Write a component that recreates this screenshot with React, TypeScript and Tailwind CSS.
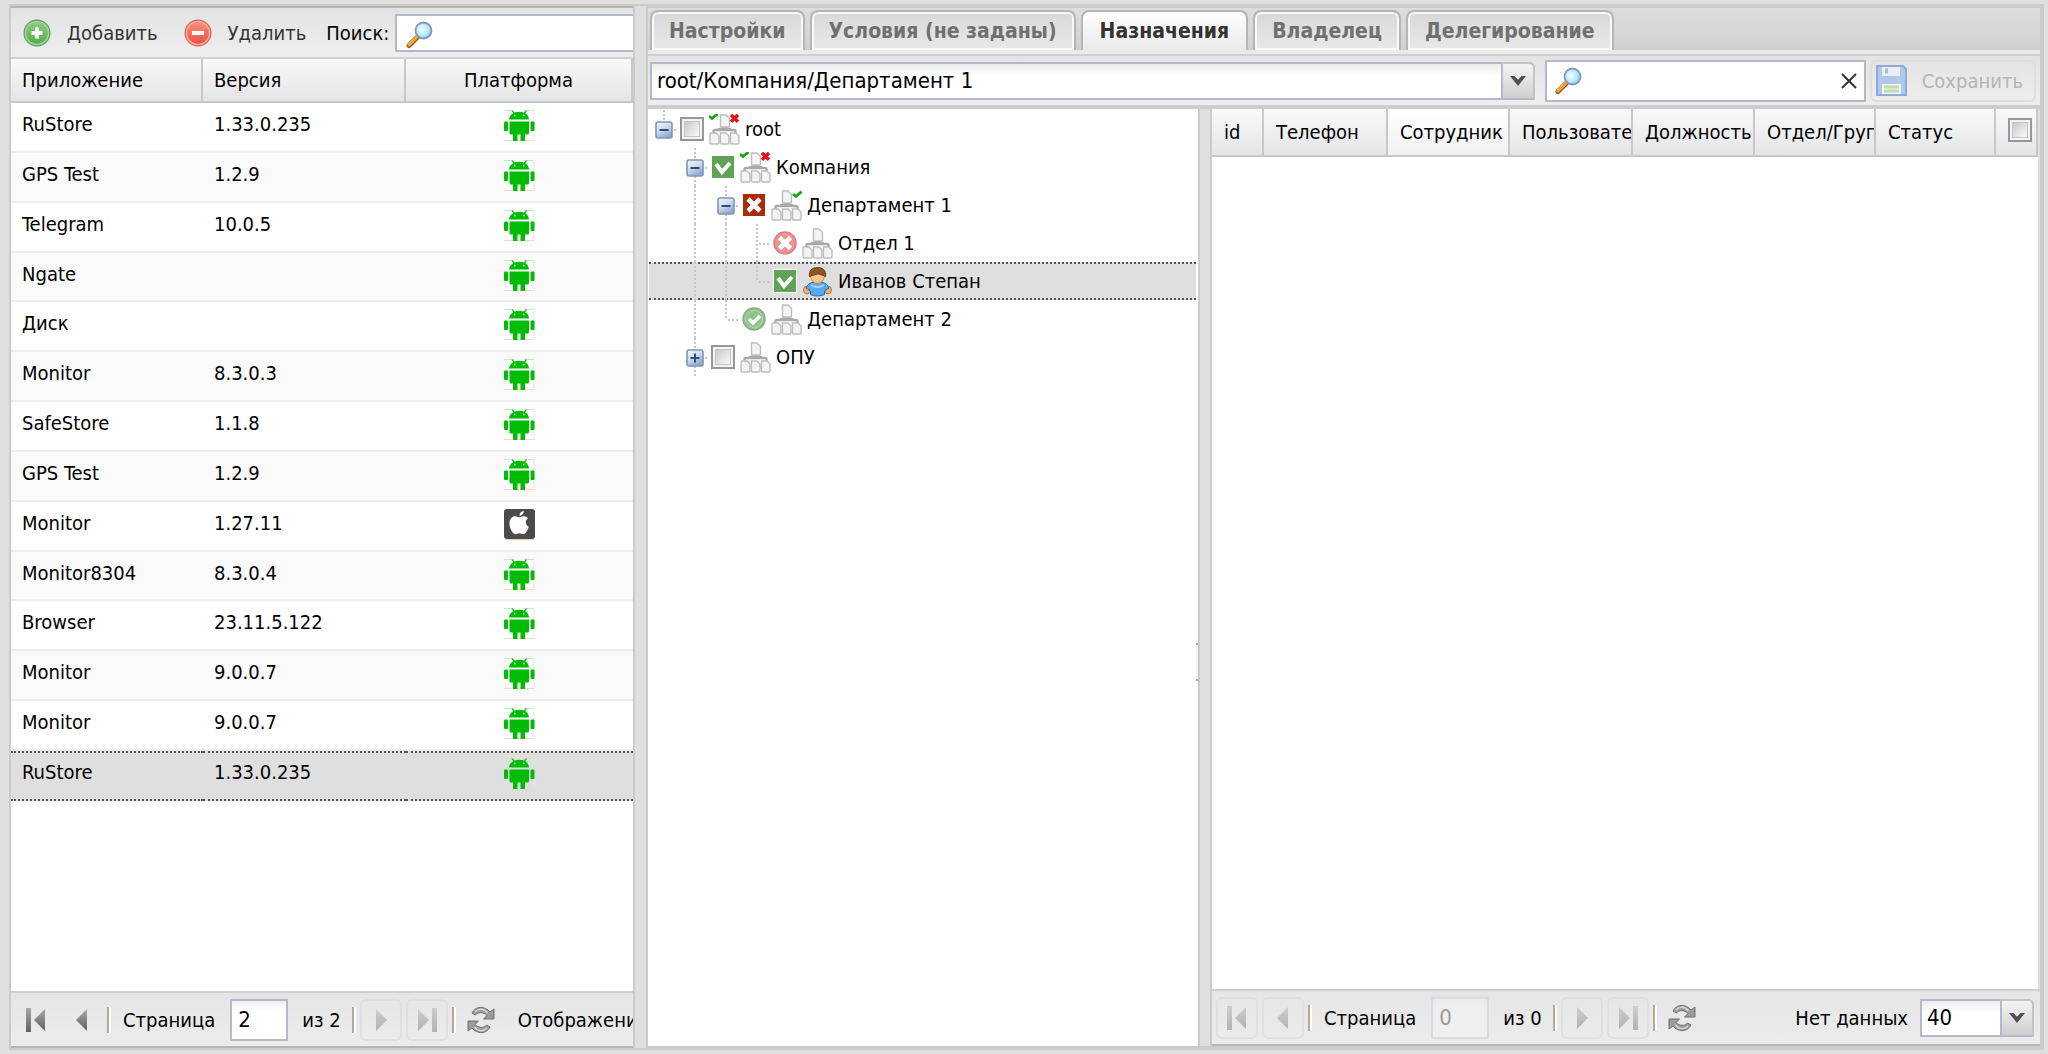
import { useState } from 'react';
import type { ReactNode } from 'react';

const apps = [
  { name: 'RuStore', version: '1.33.0.235', platform: 'android' },
  { name: 'GPS Test', version: '1.2.9', platform: 'android' },
  { name: 'Telegram', version: '10.0.5', platform: 'android' },
  { name: 'Ngate', version: '', platform: 'android' },
  { name: 'Диск', version: '', platform: 'android' },
  { name: 'Monitor', version: '8.3.0.3', platform: 'android' },
  { name: 'SafeStore', version: '1.1.8', platform: 'android' },
  { name: 'GPS Test', version: '1.2.9', platform: 'android' },
  { name: 'Monitor', version: '1.27.11', platform: 'apple' },
  { name: 'Monitor8304', version: '8.3.0.4', platform: 'android' },
  { name: 'Browser', version: '23.11.5.122', platform: 'android' },
  { name: 'Monitor', version: '9.0.0.7', platform: 'android' },
  { name: 'Monitor', version: '9.0.0.7', platform: 'android' },
  { name: 'RuStore', version: '1.33.0.235', platform: 'android' },
];

const tabs = ['Настройки', 'Условия (не заданы)', 'Назначения', 'Владелец', 'Делегирование'];

type Guide = 'empty' | 'line' | 'tee' | 'end' | 'root' | 'minus' | 'plus';
type Mark = 'none' | 'allow' | 'deny' | 'inherit-allow' | 'inherit-deny';

const nodes: { id: string; label: string; guides: Guide[]; mark: Mark; icon: string }[] = [
  { id: 'root', label: 'root', guides: ['root'], mark: 'none', icon: 'both' },
  { id: 'company', label: 'Компания', guides: ['empty', 'minus'], mark: 'allow', icon: 'both' },
  { id: 'dep1', label: 'Департамент 1', guides: ['empty', 'line', 'minus'], mark: 'deny', icon: 'check' },
  { id: 'otdel1', label: 'Отдел 1', guides: ['empty', 'line', 'line', 'tee'], mark: 'inherit-deny', icon: 'plain' },
  { id: 'ivanov', label: 'Иванов Степан', guides: ['empty', 'line', 'line', 'end'], mark: 'allow', icon: 'user' },
  { id: 'dep2', label: 'Департамент 2', guides: ['empty', 'line', 'end'], mark: 'inherit-allow', icon: 'plain' },
  { id: 'opu', label: 'ОПУ', guides: ['empty', 'plus'], mark: 'none', icon: 'plain' },
];

function AndroidIcon() {
  return (
    <svg width="31" height="31" viewBox="0 0 31 31" className="mx-auto block">
      <path d="M0 0.5h9M20 0.5h10" stroke="#b5f0c8" />
      <path d="M30 1v28" stroke="#e6e6e6" />
      <path d="M0 30.5h31" stroke="#fcd5c0" />
      <g fill="#00bc05">
        <path d="M5 9.5c.3-3 2-5.200 4.300-6.300L7.500.8l1-.5 2 2.300c3-1 6.500-1 9.500 0l2-2.300 1 .5-1.800 2.400c2.300 1.100 3.500 3.300 3.800 6.300z" />
        <path d="M5.500 11.500H25v11.500q0 1.500-1.500 1.500h-2.500V31h-4.500v-6.500h-3V31H9v-6.500H7q-1.500 0-1.500-1.500z" />
        <rect x="0" y="11.500" width="4" height="9.500" rx="1" />
        <rect x="26.500" y="11.500" width="4" height="9.500" rx="1" />
      </g>
      <path d="M10 5.500h1.500M19 5.500h1.500" stroke="#d8f7d8" strokeWidth="1.500" />
    </svg>
  );
}

function AppleIcon() {
  return (
    <svg width="31" height="31" viewBox="0 0 31 31" className="mx-auto block">
      <rect width="31" height="30" rx="3" fill="#4b4b4b" />
      <path d="M1 30.500h29" stroke="#f3c9ae" />
      <path d="M16 8.200c3-1.500 6-1.200 8 1-3.200 2.200-2.800 6.800.800 8.600-1 3-2.800 6.500-4.600 7.200-1.600.6-2.700-.7-4.700-.7s-3 1.300-4.700.7C8.500 24.200 5.500 19.500 5.500 14.500c0-5 3.300-7.800 7-7 1.300.200 2.200 1 3.500.7z" fill="#fff" />
      <path d="M15.500 6.800c0-2.500 1.600-4.500 4.200-5 .2 2.700-1.600 4.800-4.200 5z" fill="#fff" />
    </svg>
  );
}

function SearchIcon() {
  return (
    <svg width="28" height="28" viewBox="0 0 28 28">
      <defs>
        <radialGradient id="lens" cx="0.400" cy="0.450" r="0.600">
          <stop offset="0" stopColor="#f2ffff" />
          <stop offset="0.600" stopColor="#b5edff" />
          <stop offset="1" stopColor="#7fd3f7" />
        </radialGradient>
      </defs>
      <path d="M11.500 16L3 24.500" stroke="#7a5c36" strokeWidth="5" strokeLinecap="round" />
      <path d="M11 15.800L3 23.800" stroke="#f9a72b" strokeWidth="3.400" strokeLinecap="round" />
      <circle cx="17.500" cy="9.500" r="8" fill="url(#lens)" stroke="#8a93bd" strokeWidth="1.800" />
    </svg>
  );
}

function AddIcon() {
  return (
    <svg width="28" height="28" viewBox="0 0 28 28">
      <defs>
        <linearGradient id="add" x1="0" y1="0" x2="0" y2="1">
          <stop offset="0" stopColor="#8fcc85" />
          <stop offset="1" stopColor="#55ac4a" />
        </linearGradient>
      </defs>
      <circle cx="14" cy="14" r="13.500" fill="#5aa55a" />
      <circle cx="14" cy="14" r="11.500" fill="url(#add)" stroke="#a3d69b" strokeWidth="1.500" />
      <path d="M14 8.500v11M8.500 14h11" stroke="#fff" strokeWidth="4" />
    </svg>
  );
}

function RemoveIcon() {
  return (
    <svg width="28" height="28" viewBox="0 0 28 28">
      <defs>
        <linearGradient id="remove" x1="0" y1="0" x2="0" y2="1">
          <stop offset="0" stopColor="#f8907c" />
          <stop offset="1" stopColor="#ea4f41" />
        </linearGradient>
      </defs>
      <circle cx="14" cy="14" r="13.500" fill="#d9685c" />
      <circle cx="14" cy="14" r="11.500" fill="url(#remove)" stroke="#f7aa9e" strokeWidth="1.500" />
      <path d="M8 14h12" stroke="#fff" strokeWidth="4" />
    </svg>
  );
}

function SaveIcon() {
  return (
    <svg width="31" height="31" viewBox="0 0 31 31">
      <path d="M1 1h26l3 3v26H1z" fill="#b0c8ec" stroke="#8fabd6" strokeWidth="2" />
      <path d="M6 2h18v9H6z" fill="#e8eff9" />
      <path d="M9 3.500h3v5H9z" fill="#9fbbe6" />
      <path d="M6 19h19v10H6z" fill="#f1f6ee" />
      <path d="M8 22h15M8 26h15" stroke="#bfdcae" strokeWidth="3" />
    </svg>
  );
}

function Chevron() {
  return (
    <svg width="18" height="12" viewBox="0 0 18 12">
      <path d="M1 1h4.500L9 4.800 12.500 1H17L9 11z" fill="#505050" />
    </svg>
  );
}

function OrgIcon({ kind }: { kind: string }) {
  return (
    <svg width="31" height="31" viewBox="0 0 31 31">
      <path d="M4.500 19.500v-2q0-1.500 1.500-1.500h19q1.500 0 1.500 1.500v2M9 15.500q6.500-3 13 0" fill="none" stroke="#a9a9a9" strokeWidth="2.400" />
      <g fill="#f4f4f4" stroke="#bdbdbd" strokeWidth="1.400">
        <path d="M11.500 1h5.500l3.500 3.500V12q0 1-1 1h-7q-1 0-1-1V2q0-1 0-1z" />
        <path d="M1.500 19h5.500l3 3v7q0 1-1 1H2q-1 0-1-1v-9z" />
        <path d="M11.500 19h5.500l3 3v7q0 1-1 1h-6.500q-1 0-1-1v-10z" />
        <path d="M21.500 19H27l3 3v7q0 1-1 1h-6.500q-1 0-1-1v-10z" />
      </g>
      {kind === 'both' && <path d="M0 2l3 2.500L8.500 0" fill="none" stroke="#12a512" strokeWidth="2.800" />}
      {kind === 'both' && <path d="M22 .8l7 7M29 .8l-7 7" stroke="#e60f17" strokeWidth="3.400" />}
      {kind === 'check' && <path d="M22 4l3 2.500L30.500 1.500" fill="none" stroke="#12a512" strokeWidth="2.800" />}
    </svg>
  );
}

function UserIcon() {
  return (
    <svg width="31" height="31" viewBox="0 0 31 31">
      <ellipse cx="5" cy="24" rx="3.500" ry="4" fill="#f0b070" stroke="#c07a35" />
      <ellipse cx="26" cy="24" rx="3.500" ry="4" fill="#f0b070" stroke="#c07a35" />
      <path d="M4 22c2-4.500 5-6 11.500-6S25 17.500 27 22l-4.500 3v3.500c-3 2-11 2-14 0V25z" fill="#58a8f0" stroke="#2c67bd" />
      <path d="M9 19c3 2.500 10 2.500 13 0" fill="none" stroke="#a9d6fb" strokeWidth="2" />
      <path d="M8.500 8c0 6 3 9.500 7 9.500s7-3.500 7-9.500z" fill="#fbc58b" stroke="#c98647" />
      <path d="M7.500 11C6.500 4.500 10 1.500 15.500 1.500S24.500 4.500 23.500 11l-1.500-1.500c-3-.5-4.500-1-6-2-1.500 1-4 2-7 2z" fill="#8d5522" stroke="#6f3f14" />
    </svg>
  );
}

function GuideCell({ kind }: { kind: Guide }) {
  const top = kind !== 'empty';
  const bottom = kind === 'line' || kind === 'tee' || kind === 'minus' || kind === 'plus';
  const stub = top && kind !== 'line';
  const box = kind === 'root' || kind === 'minus' || kind === 'plus';
  return (
    <svg width="31" height="38" viewBox="0 0 31 38" className="shrink-0">
      <g stroke="#c6c6c6" strokeWidth="2" strokeDasharray="2 2">
        {top && <path d={kind === 'root' ? 'M15 0v10' : 'M15 0v20'} />}
        {bottom && <path d="M15 20v18" />}
        {stub && <path d="M17 20h12" />}
      </g>
      {box && (
        <g>
          <defs>
            <linearGradient id="expander" x1="0" y1="0" x2="0.600" y2="1">
              <stop offset="0" stopColor="#f4f8fc" />
              <stop offset="0.500" stopColor="#cfdcee" />
              <stop offset="1" stopColor="#8da9cf" />
            </linearGradient>
          </defs>
          <rect x="7" y="12" width="16" height="16" rx="2" fill="url(#expander)" stroke="#7d95b8" strokeWidth="1.600" />
          <path d="M10.500 20h9" stroke="#2e4d77" strokeWidth="2" />
          {kind === 'plus' && <path d="M15 15.500v9" stroke="#2e4d77" strokeWidth="2" />}
        </g>
      )}
    </svg>
  );
}

function MarkIcon({ mark }: { mark: Mark }) {
  return (
    <svg width="24" height="24" viewBox="0 0 24 24" className="pointer-events-none absolute inset-0">
      {mark === 'none' && (
        <>
          <defs>
            <linearGradient id="tick" x1="0" y1="0" x2="1" y2="1">
              <stop offset="0" stopColor="#c3c8cf" />
              <stop offset="1" stopColor="#fbfbfb" />
            </linearGradient>
          </defs>
          <rect x="1" y="1" width="22" height="22" fill="#f3f3f3" stroke="#979797" strokeWidth="2" />
          <rect x="4.500" y="4.500" width="15" height="15" fill="url(#tick)" stroke="#c4c4c4" />
        </>
      )}
      {mark === 'allow' && (
        <>
          <rect x="0" y="0" width="24" height="24" fill="#fff" />
          <rect x="1" y="1" width="22" height="22" fill="#5fa356" />
          <path d="M5 9l6 8 8-9" fill="none" stroke="#fff" strokeWidth="4" />
        </>
      )}
      {mark === 'deny' && (
        <>
          <rect x="1" y="1" width="22" height="22" fill="#ab2a08" />
          <path d="M6 6l12 12M18 6L6 18" stroke="#fff" strokeWidth="4.600" />
        </>
      )}
      {mark === 'inherit-deny' && (
        <>
          <circle cx="12" cy="12" r="11" fill="#e79494" stroke="#dd7f7f" strokeWidth="1.500" />
          <path d="M6.500 6.500l11 11M17.500 6.500l-11 11" stroke="#fff" strokeWidth="4.600" />
        </>
      )}
      {mark === 'inherit-allow' && (
        <>
          <circle cx="12" cy="12" r="11" fill="#93c08e" stroke="#84b37f" strokeWidth="1.500" />
          <circle cx="12" cy="12" r="8.500" fill="none" stroke="#b7d7b3" />
          <path d="M7 12l4 4 7-7" fill="none" stroke="#fff" strokeWidth="3.400" />
        </>
      )}
    </svg>
  );
}

function PagerArrow({ kind }: { kind: string }) {
  return (
    <svg width="24" height="28" viewBox="0 0 24 28">
      <defs>
        <linearGradient id="arrow" x1="0" y1="0" x2="0" y2="1">
          <stop offset="0" stopColor="#a8a8a8" />
          <stop offset="1" stopColor="#606060" />
        </linearGradient>
      </defs>
      <g fill="url(#arrow)">
        {kind === 'first' && <path d="M2 2h5v24H2zM21 3v22L10 14z" />}
        {kind === 'prev' && <path d="M17 3v22L6 14z" />}
        {kind === 'next' && <path d="M7 3v22L18 14z" />}
        {kind === 'last' && <path d="M17 2h5v24h-5zM3 3v22L14 14z" />}
      </g>
    </svg>
  );
}

function RefreshIcon() {
  return (
    <svg width="28" height="28" viewBox="0 0 28 28">
      <g fill="#9b9b9b" stroke="#707070" strokeWidth="1" strokeLinejoin="round">
        <path d="M5 7C8 1 15-.5 21 4l2 2 4-3v10H16.500l3.500-3.500C16.500 6 11 5.500 8.500 9z" />
        <path d="M23 21C20 27 13 28.500 7 24l-2-2-4 3V15h10.500L8 18.500C11.500 22 17 22.500 19.500 19z" />
      </g>
      <path d="M8 6c4-4 9-3.500 12.500 1M20 22c-4 4-9 3.500-12.500-1" fill="none" stroke="#d5d5d5" strokeWidth="1.500" />
    </svg>
  );
}

function PagerButton({ kind, label, disabled }: { kind: string; label: string; disabled?: boolean }) {
  return (
    <button
      aria-label={label}
      disabled={disabled}
      className="flex size-[42px] shrink-0 items-center justify-center rounded-md border-2 border-transparent disabled:border-[#dfdfdf] disabled:*:opacity-40"
    >
      {kind === 'refresh' ? <RefreshIcon /> : <PagerArrow kind={kind} />}
    </button>
  );
}

function Separator() {
  return <span className="h-[26px] w-1 shrink-0 border-l-2 border-[#b3ab97] bg-white" />;
}

function Pager({ id, page, total, first, children }: { id: string; page: string; total: string; first?: boolean; children: ReactNode }) {
  return (
    <div className="flex h-[57px] shrink-0 items-center gap-1 overflow-hidden border-y-2 border-t-[#cfcfcf] border-b-[#c0b1b1] bg-linear-to-b from-[#e5e5e5] to-[#ececec] px-1 whitespace-nowrap">
      <PagerButton kind="first" label="Первая страница" disabled={first} />
      <PagerButton kind="prev" label="Предыдущая страница" disabled={first} />
      <Separator />
      <label htmlFor={id} className="mx-2">Страница</label>
      <input
        id={id}
        defaultValue={page}
        disabled={first}
        className="mx-[3px] h-[42px] w-[58px] shrink-0 border-2 border-[#b5b8c8] bg-white bg-linear-to-b from-[#edf0f0] to-white to-25% px-[6px] text-[22px] disabled:border-[#d9dbe2] disabled:from-[#ebebeb] disabled:to-[#efefef] disabled:text-[#9b9b9b]"
      />
      <span className="mx-[7px]">{total}</span>
      <Separator />
      <PagerButton kind="next" label="Следующая страница" disabled />
      <PagerButton kind="last" label="Последняя страница" disabled />
      <Separator />
      <PagerButton kind="refresh" label="Обновить" />
      {children}
    </div>
  );
}

function Combo({ id, label, value, className }: { id: string; label: string; value: string; className: string }) {
  return (
    <div className={className}>
      <select
        id={id}
        aria-label={label}
        className="h-[38px] w-full appearance-none rounded-tr-md border-2 border-[#b5b8c8] bg-linear-to-b from-[#e9eded] to-white to-35% pl-[5px] text-[22px]"
      >
        <option>{value}</option>
      </select>
      <span className="pointer-events-none absolute inset-y-0 right-0 flex w-[34px] items-center justify-center rounded-tr-md border-2 border-[#b5b8c8] border-t-[#c4c4c4] border-r-[#c4c4c4] bg-linear-to-b from-[#f4f4f4] to-[#cfcfcf]">
        <Chevron />
      </span>
    </div>
  );
}

function AppsPanel() {
  const [selected, setSelected] = useState(13);
  return (
    <section className="flex w-[626px] shrink-0 flex-col border-x-2 border-[#cbcbcb]">
      <div className="flex h-[53px] shrink-0 items-center overflow-hidden border-y-2 border-t-[#c0b1b1] border-b-[#d0d0d0] bg-linear-to-b from-[#e3e3e3] to-[#eeeeee] whitespace-nowrap">
        <button className="ml-3 flex shrink-0 items-center gap-4 text-[#333]">
          <AddIcon />
          Добавить
        </button>
        <button className="ml-[26px] flex shrink-0 items-center gap-4 text-[#333]">
          <RemoveIcon />
          Удалить
        </button>
        <label htmlFor="app-search" className="ml-5 shrink-0">Поиск:</label>
        <div className="relative ml-[6px] h-[38px] min-w-0 flex-1">
          <input id="app-search" className="h-full w-full border-2 border-r-0 border-[#b5b8c8] bg-white pr-2 pl-11 text-[22px]" />
          <span className="pointer-events-none absolute top-[7px] left-[11px]">
            <SearchIcon />
          </span>
        </div>
      </div>
      <div className="min-h-0 flex-1 overflow-hidden bg-white">
        <table className="w-full table-fixed border-separate border-spacing-0">
          <thead>
            <tr className="h-11 bg-linear-to-b from-[#f9f9f9] to-[#e3e4e6]">
              <th className="w-[192px] border-r-2 border-b-2 border-[#c8c8c8] px-[11px] text-left font-normal">Приложение</th>
              <th className="w-[203px] border-r-2 border-b-2 border-[#c8c8c8] px-[11px] text-left font-normal">Версия</th>
              <th className="border-r-2 border-b-2 border-[#c8c8c8] text-center font-normal">Платформа</th>
            </tr>
          </thead>
        </table>
        <table className="h-[698px] w-full table-fixed border-separate border-spacing-0">
          <colgroup>
            <col className="w-[192px]" />
            <col className="w-[203px]" />
            <col />
          </colgroup>
          <tbody>
            {apps.map((app, i) => (
              <tr
                key={i}
                onClick={() => setSelected(i)}
                className={
                  i === selected
                    ? 'bg-[#dfdfdf] align-top *:border-y-2 *:border-dotted *:border-[#555] *:pt-[5px]'
                    : 'align-top *:border-b-2 *:border-[#ededed] *:pt-[7px] even:bg-[#fafafa]'
                }
              >
                <td className="px-[11px] leading-7">{app.name}</td>
                <td className="px-[11px] leading-7">{app.version}</td>
                <td>{app.platform === 'apple' ? <AppleIcon /> : <AndroidIcon />}</td>
              </tr>
            ))}
          </tbody>
        </table>
      </div>
      <Pager id="app-page" page="2" total="из 2">
        <span className="ml-[12px]">Отображение 41 - 54 из 54</span>
      </Pager>
    </section>
  );
}

function OrgTree() {
  const [selected, setSelected] = useState('ivanov');
  return (
    <div className="relative w-[552px] shrink-0 border-r-2 border-[#cbcbcb] bg-white">
      <ul className="pt-px pr-[2px] pl-px">
        {nodes.map((node) => (
          <li
            key={node.id}
            onClick={() => setSelected(node.id)}
            className={
              node.id === selected
                ? 'flex h-[38px] items-center border-y-2 border-dotted border-[#555] bg-[#dfdfdf]'
                : 'flex h-[38px] items-center'
            }
          >
            {node.guides.map((kind, i) => (
              <GuideCell key={i} kind={kind} />
            ))}
            <span className="relative size-6 shrink-0">
              <input
                id={node.id}
                type="checkbox"
                defaultChecked={node.mark !== 'none'}
                className="absolute inset-0 size-6 appearance-none"
              />
              <MarkIcon mark={node.mark} />
            </span>
            <span className="ml-[5px] shrink-0">{node.icon === 'user' ? <UserIcon /> : <OrgIcon kind={node.icon} />}</span>
            <label htmlFor={node.id} className="ml-[5px]">{node.label}</label>
          </li>
        ))}
      </ul>
      {/* splitter grip */}
      <span className="absolute top-[59%] right-0 h-[38px] w-[2px] -translate-y-1/2 border-y-2 border-[#aaa] bg-[#f0f0f0]" />
    </div>
  );
}

function StaffGrid() {
  return (
    <div className="flex min-w-0 flex-1 flex-col border-l-2 border-[#cbcbcb]">
      <div className="min-h-0 flex-1 overflow-hidden border-r-2 border-[#dedede] bg-white">
        <table className="w-full table-fixed border-separate border-spacing-0">
          <thead>
            <tr className="h-12 bg-linear-to-b from-[#f9f9f9] to-[#e3e4e6] *:overflow-hidden *:border-r-2 *:border-b-2 *:border-[#c8c8c8] *:pl-3 *:text-left *:font-normal *:whitespace-nowrap">
              <th className="w-[52px]">id</th>
              <th className="w-[124px]">Телефон</th>
              <th className="w-[122px] bg-linear-to-b from-white to-[#f0f0f0]">Сотрудник</th>
              <th className="w-[123px]">Пользователь</th>
              <th className="w-[122px]">Должность</th>
              <th className="w-[121px]">Отдел/Группа</th>
              <th>Статус</th>
              <th className="w-[42px]">
                <span className="relative -mt-1 block size-6">
                  <input type="checkbox" aria-label="Выбрать все" className="absolute inset-0 size-6 appearance-none" />
                  <MarkIcon mark="none" />
                </span>
              </th>
            </tr>
          </thead>
        </table>
      </div>
      <Pager id="staff-page" page="0" total="из 0" first>
        <span className="mr-2 ml-auto">Нет данных</span>
        <Combo id="page-size" label="Записей на странице" value="40" className="relative mr-[2px] w-[114px] shrink-0" />
      </Pager>
    </div>
  );
}

function DetailsPanel() {
  const [active, setActive] = useState(2);
  return (
    <section className="flex min-w-0 flex-1 flex-col border-2 border-r-4 border-[#cbcbcb]">
      <div className="flex h-[42px] shrink-0 items-end gap-[5px] bg-linear-to-b from-[#dedede] to-[#d0d0d0] px-[2px] text-[21px]">
        {tabs.map((tab, i) => (
          <button
            key={tab}
            onClick={() => setActive(i)}
            className={
              i === active
                ? 'h-10 rounded-t-lg border-2 border-b-0 border-[#b5b5b5] bg-linear-to-b from-white to-[#eaeaea] px-[17px] font-bold text-[#333]'
                : 'h-10 rounded-t-lg border-2 border-b-0 border-[#b5b5b5] bg-linear-to-b from-[#d9d9d9] to-[#e8e8e8] px-[17px] font-bold text-[#707070] inset-shadow-[0_0_0_2px_#f8f8f8]'
            }
          >
            {tab}
          </button>
        ))}
      </div>
      <div className="h-[6px] shrink-0 border-b-2 border-[#d0d0d0] bg-[#eaeaea]" />
      <div className="flex h-[53px] shrink-0 items-center border-b-4 border-[#cdcdcd] bg-linear-to-b from-[#e3e3e3] to-[#eeeeee] pr-1 pl-[2px]">
        <Combo id="path" label="Подразделение" value="root/Компания/Департамент 1" className="relative min-w-0 flex-1" />
        <div className="relative ml-[10px] h-[42px] w-[321px] shrink-0">
          <input aria-label="Поиск" className="h-full w-full border-2 border-[#b5b8c8] bg-white pr-10 pl-11 text-[22px]" />
          <span className="pointer-events-none absolute top-[7px] left-[10px]">
            <SearchIcon />
          </span>
          <button aria-label="Очистить" className="absolute top-3 right-2 flex size-[18px] items-center justify-center">
            <svg width="16" height="16" viewBox="0 0 16 16">
              <path d="M1 1l14 14M15 1L1 15" stroke="#333" strokeWidth="2" />
            </svg>
          </button>
        </div>
        <button disabled className="ml-1 flex h-[42px] shrink-0 items-center gap-[15px] rounded-md border-2 border-[#dedede] pr-[11px] pl-[4px] text-[#b4b4b4]">
          <SaveIcon />
          Сохранить
        </button>
      </div>
      <div className="flex min-h-0 flex-1">
        <OrgTree />
        <div className="w-[10px] shrink-0 bg-[#dfdfdf]" />
        <StaffGrid />
      </div>
    </section>
  );
}

export default function App() {
  return (
    <div className="h-screen bg-[#dfdfdf] pt-1 pr-1 pb-1 pl-[9px] font-['DejaVu_Sans_Condensed','DejaVu_Sans',sans-serif] text-[20px] leading-6 text-black">
      <main className="flex h-full gap-[11px] border-y-2 border-[#cbcbcb]">
        <AppsPanel />
        <DetailsPanel />
      </main>
    </div>
  );
}
